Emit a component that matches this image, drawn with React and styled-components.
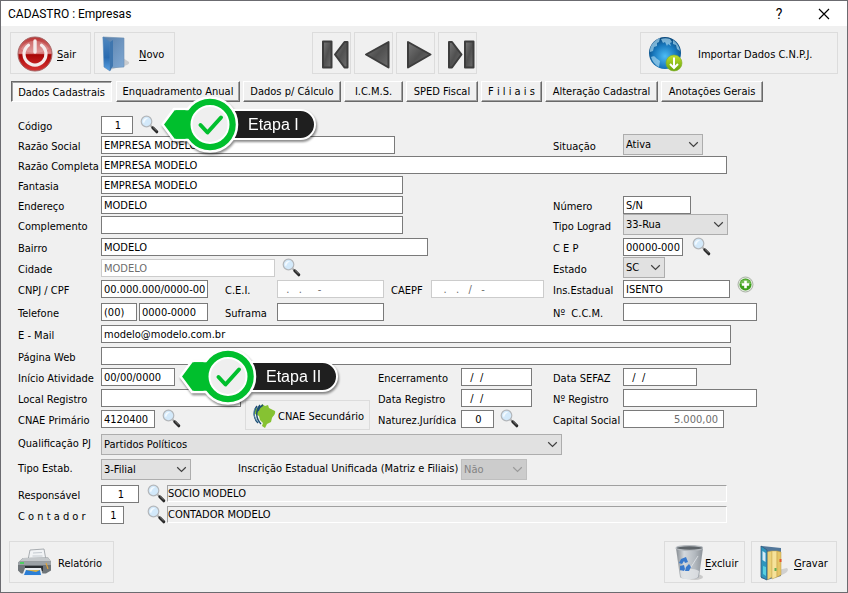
import React from 'react';
import styled, { createGlobalStyle } from 'styled-components';

const GlobalStyle = createGlobalStyle`
  *, *::before, *::after {
    box-sizing: border-box;
  }

  body {
    margin: 0;
    background: #f0f0f0;
  }

  body, button, input, select {
    font-family: Tahoma, "DejaVu Sans Condensed", "DejaVu Sans", sans-serif;
    font-size: 11px;
    color: #000;
  }
`;

const Window = styled.div`
  display: flex;
  flex-direction: column;
  min-height: 100vh;
  background: #f0f0f0;
  border: 1px solid #6b6b70;
`;

const TitleBar = styled.header`
  display: flex;
  align-items: center;
  height: 25px;
  padding: 0 14px 0 7px;
  background: #fff;
`;

const WindowTitle = styled.h1`
  flex: 1;
  margin: 0;
  font: 400 12px/24px Roboto, "Noto Sans", sans-serif;
`;

const TitleButton = styled.button`
  display: flex;
  align-items: center;
  justify-content: center;
  width: 18px;
  height: 22px;
  margin-left: 27px;
  padding: 0;
  border: none;
  background: none;
  font: 400 14px/22px Roboto, "Noto Sans", sans-serif;
`;

const Toolbar = styled.div`
  display: flex;
  gap: 3px;
  padding: 6px 9px 0;
`;

const ActionButton = styled.button`
  display: flex;
  align-items: center;
  gap: ${props => props.$gap || 4}px;
  width: ${props => props.$width}px;
  height: 42px;
  padding: 2px 0 0 6px;
  border: 1px solid #dcdcdc;
  background: #f0f0f0;
  white-space: nowrap;
  cursor: pointer;

  svg {
    flex: none;
  }

  u {
    text-underline-offset: 2px;
  }
`;

const NavGroup = styled.nav`
  display: flex;
  gap: 3px;
  margin: 0 auto 0 134px;
`;

const Tabs = styled.div`
  display: flex;
  gap: 3px;
  padding: 7px 10px 0;
`;

const Tab = styled.button`
  width: ${props => props.$width}px;
  height: 21px;
  padding: ${props => (props.$active ? '2px 0 0' : '0')};
  border: 1px solid;
  border-color: ${props => (props.$active ? '#696969 #fff #fff #696969' : '#fff #696969 #696969 #fff')};
  box-shadow: ${props => (props.$active ? 'inset 1px 1px #a0a0a0' : 'inset -1px -1px #a0a0a0')};
  background: ${props => (props.$active ? '#f8f8f8' : '#f0f0f0')};
  margin-right: ${props => (props.$active ? '1px' : '0')};
  white-space: pre;
`;

const Form = styled.form`
  display: flex;
  flex-direction: column;
  flex: 1;
  margin: 0;
  padding-top: 14px;
`;

const Group = styled.div`
  display: grid;
  grid-auto-rows: ${props => props.$row || 18}px;
  row-gap: ${props => props.$gap}px;
  margin-bottom: ${props => props.$after}px;
`;

// Drop-downs are taller than a row: they keep its bottom line and grow upwards.
const Row = styled.div`
  position: relative;
  display: grid;
  grid-template-columns: 83px minmax(452px, 1fr) 70px 224px;
  grid-template-rows: minmax(0, 1fr);
  align-items: end;
  padding-left: 17px;
`;

const Label = styled.label`
  align-self: start;
  flex: none;
  width: ${props => (props.$width ? `${props.$width}px` : 'auto')};
  height: 18px;
  margin-left: ${props => props.$left || 0}px;
  padding-top: 1px;
  line-height: 20px;
  white-space: pre;
`;

const Cell = styled.div`
  display: flex;
  align-items: end;
  min-width: 0;
  height: 100%;
`;

const WideCell = styled(Cell)`
  grid-column: 2 / -1;
  padding-right: ${props => props.$tail || 120}px;
`;

const Pair = styled.div`
  display: flex;
  align-items: end;
  width: 175px;
  height: 18px;
  margin-left: auto;
`;

const Input = styled.input`
  flex: ${props => (props.$width ? 'none' : '1')};
  width: ${props => (props.$width ? `${props.$width}px` : 'auto')};
  min-width: 0;
  height: 18px;
  margin-right: ${props => props.$after || 0}px;
  padding: 0 0 0 2px;
  border: 1px solid #7a7a7a;
  border-radius: 0;
  background: #fff;
  text-align: ${props => props.$align || 'left'};

  &:disabled {
    border-color: #ccc;
    color: #6d6d6d;
  }
`;

const MoneyInput = styled(Input)`
  padding-right: 5px;
  color: #6d6d6d;
`;

const SunkenInput = styled(Input)`
  align-self: start;
  height: 17px;
  padding: 0;
  border-color: #a0a0a0 #fff #fff #a0a0a0;
  background: #f0f0f0;
`;

const CodeSlot = styled.div`
  display: flex;
  width: 46px;
`;

const SelectBox = styled.div`
  position: relative;
  flex: none;
  width: ${props => props.$width}px;
  height: 21px;
  margin-bottom: -1px;

  svg {
    position: absolute;
    top: 7px;
    right: 4px;
    pointer-events: none;
  }
`;

const NativeSelect = styled.select`
  width: 100%;
  height: 100%;
  padding: 0 16px 0 2px;
  border: 1px solid #adadad;
  border-radius: 0;
  background: #e1e1e1;
  appearance: none;

  &:disabled {
    border-color: #bfbfbf;
    background: #ccc;
    color: #838383;
    opacity: 1;
  }
`;

const IconButton = styled.button`
  display: flex;
  flex: none;
  align-self: start;
  width: 20px;
  height: 18px;
  margin-left: ${props => props.$left || 0}px;
  margin-top: ${props => (props.$raised ? '-4px' : '-1px')};
  padding: 0;
  border: none;
  background: none;
  cursor: pointer;

  svg {
    flex: none;
  }
`;

const CnaeButton = styled(ActionButton)`
  height: 30px;
  margin: 0 0 -2px 63px;
`;

const CalloutBox = styled.div`
  position: absolute;
  top: -20px;
  left: ${props => props.$left}px;
  z-index: 1;
  display: flex;
  align-items: center;
  height: 57px;
  filter: drop-shadow(1px 2px 1px rgba(0, 0, 0, 0.45));

  svg {
    position: relative;
    z-index: 1;
  }
`;

const CalloutText = styled.span`
  height: 31px;
  margin-left: -14px;
  padding: 0 15px 0 21px;
  border: 2px solid #fff;
  border-radius: 0 16px 16px 0;
  background: #1f1f1f;
  color: #fff;
  font: 16px/28px "Liberation Sans", Arial, sans-serif;
  white-space: nowrap;
`;

const Footer = styled.footer`
  display: flex;
  gap: 6px;
  padding: 0 10px 9px 8px;
`;

const Spacer = styled.div`
  flex: 1;
`;

const Chevron = ({ color = '#404040' }) => (
  <svg width="11" height="7" viewBox="0 0 11 7" fill="none" stroke={color} strokeWidth="1.2" aria-hidden="true">
    <path d="M1.2 1.2 5.5 5.4 9.8 1.2" />
  </svg>
);

const Select = ({ id, width, value, disabled }) => (
  <SelectBox $width={width}>
    <NativeSelect id={id} defaultValue={value} disabled={disabled}>
      <option>{value}</option>
    </NativeSelect>
    <Chevron color={disabled ? '#9a9a9a' : undefined} />
  </SelectBox>
);

const Lens = ({ left, label }) => (
  <IconButton type="button" $left={left} aria-label={label}>
    <svg width="20" height="20" viewBox="0 0 20 20" fill="none">
      <path d="m10.500 10.500 3 3" stroke="#9a9a9a" strokeWidth="1.6" />
      <path d="m12.800 12.800 4 4" stroke="#262626" strokeWidth="3" strokeLinecap="round" />
      <path d="m13 12.400 3.600 3.400" stroke="#8b8b8b" strokeWidth="0.8" />
      <circle cx="6.500" cy="6.500" r="5.300" fill="#d3e9fa" stroke="#b3b7bb" strokeWidth="1.200" />
      <path d="M3 6.500a3.700 3.700 0 0 1 5.200-3.200C6.400 4.100 4.900 5.500 4 8.500 3.300 8 3 7.300 3 6.500Z" fill="#f3faff" />
    </svg>
  </IconButton>
);

const PowerIcon = () => (
  <svg width="36" height="36" viewBox="0 0 36 36" fill="none">
    <defs>
      <linearGradient id="power" x1="0" y1="0" x2="0" y2="1">
        <stop offset="0" stopColor="#b93434" />
        <stop offset="0.48" stopColor="#dc8585" />
        <stop offset="0.52" stopColor="#a80606" />
        <stop offset="1" stopColor="#d93434" />
      </linearGradient>
    </defs>
    <circle cx="18" cy="18" r="17" fill="url(#power)" stroke="#a46464" />
    <path d="M4 13C9 2 27 2 32 13 25 18 11 18 4 13Z" fill="#fff" opacity="0.2" />
    <path d="M11.500 9.200a11 11 0 1 0 13 0" stroke="#f5ecec" strokeWidth="3.200" strokeLinecap="round" />
    <path d="M18 5v11" stroke="#f5ecec" strokeWidth="3.400" strokeLinecap="round" />
  </svg>
);

const FolderIcon = () => (
  <svg width="30" height="38" viewBox="0 0 30 38">
    <defs>
      <linearGradient id="folder" x1="0" y1="0" x2="1" y2="1">
        <stop offset="0" stopColor="#587ea8" />
        <stop offset="1" stopColor="#80a9d4" />
      </linearGradient>
      <linearGradient id="spine" x1="0" y1="0" x2="0" y2="1">
        <stop offset="0" stopColor="#5188bf" />
        <stop offset="0.600" stopColor="#2a6bb0" />
        <stop offset="1" stopColor="#5aa2e4" />
      </linearGradient>
    </defs>
    <path d="m22 23 6 4c1 2-3 4-7 4L9 35Z" fill="#b9bcc0" opacity="0.700" />
    <path d="M2 2 23 3v29L7 33Z" fill="url(#folder)" stroke="#6b8eb2" strokeWidth="0.600" />
    <path d="m2 2 7 5v29l-6-4Z" fill="url(#spine)" stroke="#4e83b8" strokeWidth="0.600" />
    <path d="m9 7 3-2v26l-3 5Z" fill="#3f76ae" />
  </svg>
);

const GlobeIcon = () => (
  <svg width="36" height="36" viewBox="-1 0 36 36">
    <defs>
      <radialGradient id="globe" cx="0.500" cy="0.600" r="0.600">
        <stop offset="0" stopColor="#4dbcf5" />
        <stop offset="0.600" stopColor="#1878bd" />
        <stop offset="1" stopColor="#0a4679" />
      </radialGradient>
      <linearGradient id="download" x1="0" y1="0" x2="0" y2="1">
        <stop offset="0" stopColor="#c3de2e" />
        <stop offset="1" stopColor="#64a50b" />
      </linearGradient>
    </defs>
    <circle cx="17" cy="17" r="16" fill="url(#globe)" />
    <g fill="#a6d7f0" opacity="0.700">
      <path d="M3 10c2-4 6-7 9-8l-1 4-2 1v3l-3 1-1 4-3 1c0-2 0-4 1-6Z" />
      <path d="M13 3c3-1 6-1 9 0l2 3-2 1 1 3-3-2-1 2-2-4-2 1Z" />
      <path d="M25 4c4 3 6 6 7 11l-3-2-1-4-3-1Z" />
      <path d="M3 21c2-1 4-1 5 1l4 3-1 6c-4-2-7-6-8-10Z" />
    </g>
    <circle cx="26" cy="27" r="8" fill="url(#download)" stroke="#83ad26" strokeWidth="0.600" />
    <path d="M26 21.500v10m-4-3.500 4 4 4-4" fill="none" stroke="#fff" strokeWidth="2" />
  </svg>
);

const NAV_SHAPES = {
  first: ['M3 2.500h8.500v26H3Z', 'M27.500 3v25.500h-3L15 15.500l9.500-12.500Z'],
  prev: ['M26.500 3v25.500L4 15.500Z'],
  next: ['M4 3v25.500l22.500-13Z'],
  last: ['M3 3h3l9.500 12.500L6 28.500H3Z', 'M19 2.500h8.500v26H19Z'],
};

const NavIcon = ({ name }) => (
  <svg width="31" height="31" viewBox="-1 0 31 31">
    <defs>
      <linearGradient id={`nav-${name}`} x1="0" y1="0" x2="1" y2="1">
        <stop offset="0" stopColor="#787878" />
        <stop offset="0.500" stopColor="#505050" />
        <stop offset="1" stopColor="#6e6e6e" />
      </linearGradient>
    </defs>
    {NAV_SHAPES[name].map(d => (
      <path key={d} d={d} fill={`url(#nav-${name})`} stroke="#3d3d3d" strokeWidth="2" strokeLinejoin="round" />
    ))}
  </svg>
);

const PlusIcon = () => (
  <svg width="17" height="17" viewBox="0 0 17 17">
    <circle cx="8.500" cy="8.500" r="7.500" fill="#e4e9e1" stroke="#aab3a6" />
    <circle cx="8.500" cy="8.500" r="6" fill="#3ea01c" />
    <path d="M3 8a5.600 5.600 0 0 1 11 0Z" fill="#74bd55" />
    <path d="M8.500 4.800v7.400M4.800 8.500h7.400" stroke="#fff" strokeWidth="2.600" />
  </svg>
);

const BrazilIcon = () => (
  <svg width="24" height="26" viewBox="0 0 24 26" fill="none">
    <path d="m5 5 4-2 1-2 3 2 3-1 1 3 6 3c1 3-2 5-3 7l-1 4-4 2-2 4-3-2 1-3-3-3-1-4-4-2-1-4Z" fill="#86c232" />
    <path d="M5 3C1 8 1 15 6 20M8 2C3 8 4 16 9 21M11 2C9 3 7 5 6 8" stroke="#1d4e74" strokeWidth="1.400" />
    <path d="M3 5c-2 5-1 10 3 14" stroke="#5b8fae" strokeWidth="0.900" />
  </svg>
);

const PrinterIcon = () => (
  <svg width="36" height="30" viewBox="-1 0 36 30">
    <path d="m13 2 14-1 2 11H11Z" fill="#f1f3f5" stroke="#969ba0" strokeWidth="0.800" />
    <path d="m16 5 9-.5M15.500 8h10" stroke="#c4cad0" />
    <path d="m6 10 25-.500 3 4v9l-5 3H4l-3-3v-8Z" fill="#6f7579" />
    <path d="m6 10 25-.500 3 4H2Z" fill="#c3c7ca" />
    <path d="M1 14h33v3H1Z" fill="#9ba1a5" />
    <path d="M3 15h4" stroke="#45d35a" strokeWidth="1.800" />
    <path d="M8 18h18v5H8Z" fill="#2b2f33" />
    <path d="m8 20 16 0 2 8H5Z" fill="#e8edf0" />
    <path d="m9 22 14 0 1 5H7Z" fill="#2b7ed6" />
    <path d="m9 22 14 0-4 2Z" fill="#d6b14a" />
    <path d="m29 15 2 6" stroke="#e0a23b" strokeWidth="1.200" />
  </svg>
);

const BinIcon = () => (
  <svg width="32" height="38" viewBox="-3 0 32 38">
    <defs>
      <linearGradient id="bin" x1="0" y1="0" x2="1" y2="0">
        <stop offset="0" stopColor="#848a90" />
        <stop offset="0.300" stopColor="#d5d9dd" />
        <stop offset="0.700" stopColor="#b3b9bf" />
        <stop offset="1" stopColor="#8b9197" />
      </linearGradient>
    </defs>
    <ellipse cx="21" cy="33" rx="8" ry="3" fill="#c9c9c9" />
    <path d="M2 4h27l-4 29c-1 3-18 3-19 0Z" fill="url(#bin)" />
    <path d="M6 27c5-3 14-3 19 0l-1 6c-3 3-15 3-17 0Z" fill="#e3e6e8" opacity="0.800" />
    <ellipse cx="15.500" cy="4" rx="13.500" ry="2.400" fill="#5d6368" stroke="#b6bbc0" strokeWidth="1.200" />
    <path d="m7 15 5-2 2 5-3 1-1-2-2 3-3-1Zm-1 7 4-1 1 4-1 2-4-1Zm6 1 3-3 2 3-2 4h-4Z" fill="#3979cc" />
    <path d="m24 12-7 11" stroke="#e9ecef" opacity="0.700" />
  </svg>
);

const BinderIcon = () => (
  <svg width="32" height="38" viewBox="0 0 32 38">
    <path d="m20 26 9-2c3 2-2 7-9 8Z" fill="#c2c2c2" opacity="0.700" />
    <path d="m3 2 20 2v28L9 36l-6-2Z" fill="#52779a" />
    <path d="m9 8 5-1v26l-5 3Z" fill="#ecd27a" stroke="#c9a850" strokeWidth="0.500" />
    <path d="m14 7 5 0v26l-5 2Z" fill="#f6e29a" stroke="#c9a850" strokeWidth="0.500" />
    <path d="m19 7 4 1v23l-4 2Z" fill="#e5c566" stroke="#c29c44" strokeWidth="0.500" />
    <path d="m3 2 6 4v30l-6-3Z" fill="#2e96bd" stroke="#345b80" strokeWidth="0.800" />
    <path d="m4.500 7 3 2v9l-3-2Z" fill="#d5eaf6" />
    <path d="m5 22 3 1v9l-3-2Z" fill="#58cfdf" />
    <path d="M21.500 15h2v3h-2Z" fill="#e4572e" />
    <path d="M16.500 24h2v3h-2Z" fill="#63ad55" />
  </svg>
);

const Callout = ({ left, children }) => (
  <CalloutBox $left={left}>
    <svg width="78" height="57" viewBox="0 0 78 57" fill="none">
      <path d="M1.500 28.500 13 13h23v31H13Z" fill="#00bf2d" stroke="#fff" strokeWidth="2.500" strokeLinejoin="round" />
      <circle cx="49" cy="28.500" r="27" fill="#00bf2d" stroke="#fff" strokeWidth="2.500" />
      <path d="M15 14.300h21v28.400H15Z" fill="#00bf2d" />
      <circle cx="49" cy="28.500" r="18.500" fill="#efefef" stroke="#fff" strokeWidth="2" />
      <path d="m39.500 29 7 7.500 13.500-15" stroke="#00bf2d" strokeWidth="4" strokeLinecap="round" strokeLinejoin="round" />
    </svg>
    <CalloutText>{children}</CalloutText>
  </CalloutBox>
);

const TABS = [
  { name: 'Dados Cadastrais', width: 101 },
  { name: 'Enquadramento Anual', width: 124 },
  { name: 'Dados p/ Cálculo', width: 98 },
  { name: 'I.C.M.S.', width: 59 },
  { name: 'SPED Fiscal', width: 72 },
  { name: 'F i l i a i s', width: 61 },
  { name: 'Alteração Cadastral', width: 113 },
  { name: 'Anotações Gerais', width: 102 },
];

const NAVIGATION = [
  { icon: 'first', label: 'Primeiro' },
  { icon: 'prev', label: 'Anterior' },
  { icon: 'next', label: 'Próximo' },
  { icon: 'last', label: 'Último' },
];

const App = () => (
  <>
    <GlobalStyle />
    <Window>
      <TitleBar>
        <WindowTitle>CADASTRO : Empresas</WindowTitle>
        <TitleButton aria-label="Ajuda">?</TitleButton>
        <TitleButton aria-label="Fechar">
          <svg width="12" height="12" viewBox="0 0 12 12" stroke="#000" strokeWidth="1.200">
            <path d="m1 1 10 10M11 1 1 11" />
          </svg>
        </TitleButton>
      </TitleBar>

      <Toolbar>
        <ActionButton $width={81}><PowerIcon /><span><u>S</u>air</span></ActionButton>
        <ActionButton $width={81} $gap={8}><FolderIcon /><span><u>N</u>ovo</span></ActionButton>
        <NavGroup>
          {NAVIGATION.map(item => (
            <ActionButton key={item.icon} $width={39} aria-label={item.label}>
              <NavIcon name={item.icon} />
            </ActionButton>
          ))}
        </NavGroup>
        <ActionButton $width={198} $gap={15}><GlobeIcon /><span>Importar Dados C.N.P.J.</span></ActionButton>
      </Toolbar>

      <Tabs role="tablist">
        {TABS.map((tab, i) => (
          <Tab key={tab.name} role="tab" aria-selected={i === 0} $width={tab.width} $active={i === 0}>
            {tab.name}
          </Tab>
        ))}
      </Tabs>

      <Form onSubmit={e => e.preventDefault()}>
        <Group $gap={2} $after={4}>
          <Row>
            <Label htmlFor="codigo">Código</Label>
            <Cell>
              <Input id="codigo" $width={32} $align="center" defaultValue="1" />
              <Lens left={7} label="Buscar empresa" />
            </Cell>
            <Callout left={160}>Etapa I</Callout>
          </Row>
          <Row>
            <Label htmlFor="razao">Razão Social</Label>
            <Cell><Input id="razao" $width={294} defaultValue="EMPRESA MODELO" /></Cell>
            <Label htmlFor="situacao">Situação</Label>
            <Cell><Select id="situacao" width={80} value="Ativa" /></Cell>
          </Row>
          <Row>
            <Label htmlFor="completa">Razão Completa</Label>
            <WideCell><Input id="completa" defaultValue="EMPRESA MODELO" /></WideCell>
          </Row>
          <Row>
            <Label htmlFor="fantasia">Fantasia</Label>
            <Cell><Input id="fantasia" $width={302} defaultValue="EMPRESA MODELO" /></Cell>
          </Row>
          <Row>
            <Label htmlFor="endereco">Endereço</Label>
            <Cell><Input id="endereco" $width={302} defaultValue="MODELO" /></Cell>
            <Label htmlFor="numero">Número</Label>
            <Cell><Input id="numero" $width={68} defaultValue="S/N" /></Cell>
          </Row>
          <Row>
            <Label htmlFor="complemento">Complemento</Label>
            <Cell><Input id="complemento" $width={302} /></Cell>
            <Label htmlFor="lograd">Tipo Lograd</Label>
            <Cell><Select id="lograd" width={105} value="33-Rua" /></Cell>
          </Row>
        </Group>

        <Group $gap={3} $after={5}>
          <Row>
            <Label htmlFor="bairro">Bairro</Label>
            <Cell><Input id="bairro" $width={327} defaultValue="MODELO" /></Cell>
            <Label htmlFor="cep">C E P</Label>
            <Cell>
              <Input id="cep" $width={60} defaultValue="00000-000" />
              <Lens left={9} label="Buscar CEP" />
            </Cell>
          </Row>
          <Row>
            <Label htmlFor="cidade">Cidade</Label>
            <Cell>
              <Input id="cidade" $width={174} defaultValue="MODELO" disabled />
              <Lens left={7} label="Buscar cidade" />
            </Cell>
            <Label htmlFor="estado">Estado</Label>
            <Cell><Select id="estado" width={42} value="SC" /></Cell>
          </Row>
          <Row>
            <Label htmlFor="cnpj">CNPJ / CPF</Label>
            <Cell>
              <Input id="cnpj" $width={107} defaultValue="00.000.000/0000-00" />
              <Label htmlFor="cei" $left={17} $width={52}>C.E.I.</Label>
              <Input id="cei" $width={107} defaultValue="  .   .     -" disabled />
              <Label htmlFor="caepf" $left={7} $width={40}>CAEPF</Label>
              <Input id="caepf" $width={113} defaultValue="   .   .   /   -" disabled />
            </Cell>
            <Label htmlFor="inscricao">Ins.Estadual</Label>
            <Cell>
              <Input id="inscricao" $width={107} defaultValue="ISENTO" />
              <IconButton type="button" $left={7} $raised aria-label="Adicionar inscrição"><PlusIcon /></IconButton>
            </Cell>
          </Row>
        </Group>

        <Group $gap={4} $after={3}>
          <Row>
            <Label htmlFor="ddd">Telefone</Label>
            <Cell>
              <Input id="ddd" $width={36} $after={2} defaultValue="(00)" />
              <Input aria-label="Número do telefone" $width={69} defaultValue="0000-0000" />
              <Label htmlFor="suframa" $left={17} $width={52}>Suframa</Label>
              <Input id="suframa" $width={107} />
            </Cell>
            <Label htmlFor="ccm">{'Nº  C.C.M.'}</Label>
            <Cell><Input id="ccm" $width={134} /></Cell>
          </Row>
          <Row>
            <Label htmlFor="email">E - Mail</Label>
            <WideCell $tail={116}><Input id="email" defaultValue="modelo@modelo.com.br" /></WideCell>
          </Row>
          <Row>
            <Label htmlFor="web">Página Web</Label>
            <WideCell $tail={116}><Input id="web" /></WideCell>
          </Row>
        </Group>

        <Group $gap={3} $after={5}>
          <Row>
            <Label htmlFor="inicio">Início Atividade</Label>
            <Cell>
              <Input id="inicio" $width={74} defaultValue="00/00/0000" />
              <Pair>
                <Label htmlFor="encerramento" $width={83}>Encerramento</Label>
                <Input id="encerramento" $width={71} defaultValue="  /  /" />
              </Pair>
            </Cell>
            <Label htmlFor="sefaz">Data SEFAZ</Label>
            <Cell><Input id="sefaz" $width={74} defaultValue="  /  /" /></Cell>
            <Callout left={178}>Etapa II</Callout>
          </Row>
          <Row>
            <Label htmlFor="local">Local Registro</Label>
            <Cell>
              <Input id="local" $width={140} />
              <Pair>
                <Label htmlFor="data-registro" $width={83}>Data Registro</Label>
                <Input id="data-registro" $width={71} defaultValue="  /  /" />
              </Pair>
            </Cell>
            <Label htmlFor="registro">Nº Registro</Label>
            <Cell><Input id="registro" $width={134} /></Cell>
          </Row>
          <Row>
            <Label htmlFor="cnae">CNAE Primário</Label>
            <Cell>
              <Input id="cnae" $width={54} defaultValue="4120400" />
              <Lens left={7} label="Buscar CNAE" />
              <CnaeButton type="button" $width={125} $gap={2}><BrazilIcon />CNAE Secundário</CnaeButton>
              <Pair>
                <Label htmlFor="natureza" $width={83}>Naturez.Jurídica</Label>
                <Input id="natureza" $width={33} $align="center" defaultValue="0" />
                <Lens left={6} label="Buscar natureza jurídica" />
              </Pair>
            </Cell>
            <Label htmlFor="capital">Capital Social</Label>
            <Cell><MoneyInput id="capital" $width={101} $align="right" defaultValue="5.000,00" /></Cell>
          </Row>
        </Group>

        <Group $row={21} $gap={4} $after={6}>
          <Row>
            <Label htmlFor="qualificacao">Qualificação PJ</Label>
            <WideCell><Select id="qualificacao" width={461} value="Partidos Políticos" /></WideCell>
          </Row>
          <Row>
            <Label htmlFor="tipo">Tipo Estab.</Label>
            <WideCell>
              <Select id="tipo" width={90} value="3-Filial" />
              <Label htmlFor="unificada" $left={47} $width={223}>Inscrição Estadual Unificada (Matriz e Filiais)</Label>
              <Select id="unificada" width={66} value="Não" disabled />
            </WideCell>
          </Row>
        </Group>

        <Group $gap={3} $after={17}>
          <Row>
            <Label htmlFor="responsavel">Responsável</Label>
            <WideCell>
              <CodeSlot><Input id="responsavel" $width={38} $align="center" defaultValue="1" /></CodeSlot>
              <Lens label="Buscar responsável" />
              <SunkenInput aria-label="Nome do responsável" defaultValue="SOCIO MODELO" readOnly />
            </WideCell>
          </Row>
          <Row>
            <Label htmlFor="contador">C o n t a d o r</Label>
            <WideCell>
              <CodeSlot><Input id="contador" $width={23} $align="center" defaultValue="1" /></CodeSlot>
              <Lens label="Buscar contador" />
              <SunkenInput aria-label="Nome do contador" defaultValue="CONTADOR MODELO" readOnly />
            </WideCell>
          </Row>
        </Group>
      </Form>

      <Footer>
        <ActionButton $width={105} $gap={6}><PrinterIcon /><span>Relatório</span></ActionButton>
        <Spacer />
        <ActionButton $width={81} $gap={2}><BinIcon /><span><u>E</u>xcluir</span></ActionButton>
        <ActionButton $width={86} $gap={4}><BinderIcon /><span><u>G</u>ravar</span></ActionButton>
      </Footer>
    </Window>
  </>
);

export default App;
